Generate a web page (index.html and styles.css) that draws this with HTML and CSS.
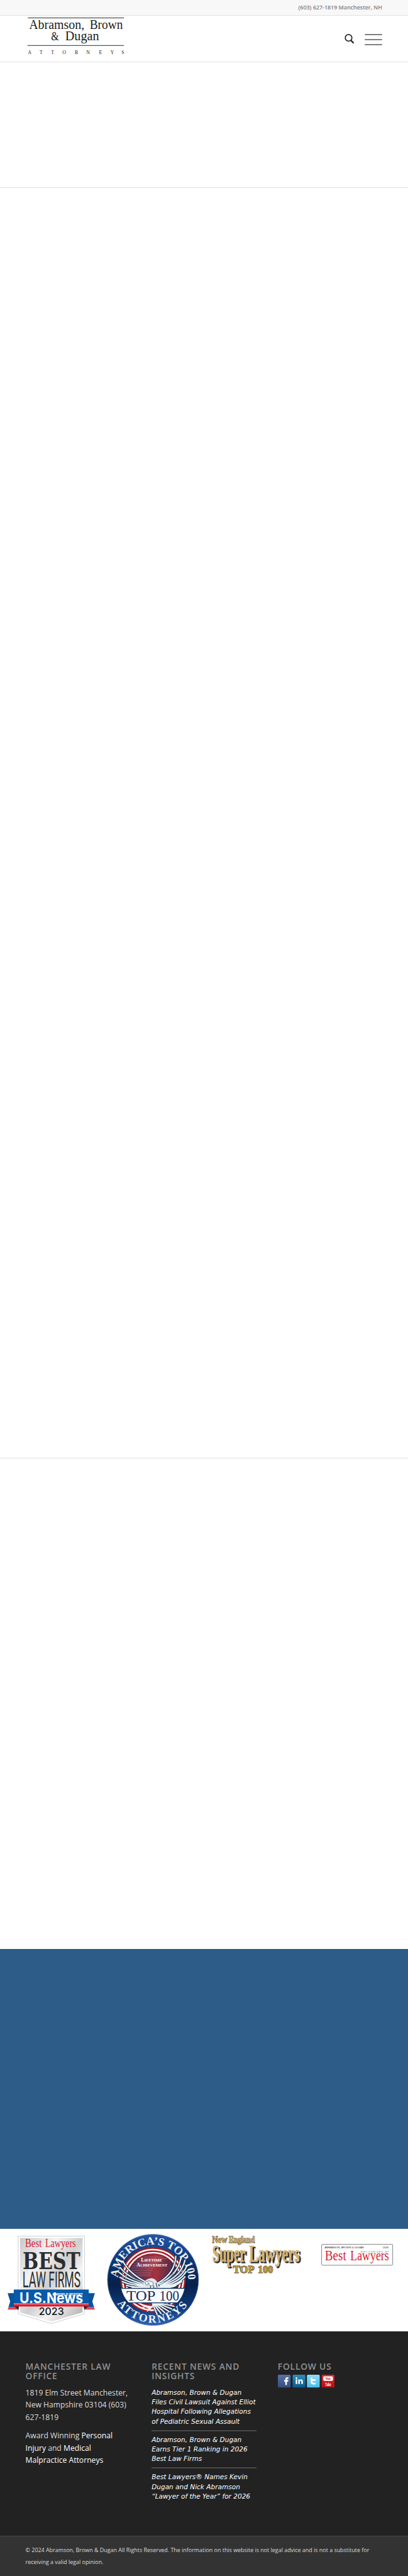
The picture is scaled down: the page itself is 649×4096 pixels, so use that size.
FILE: index.html
```html
<!DOCTYPE html>
<html lang="en">
<head>
  <meta charset="UTF-8">
  <title>Abramson, Brown &amp; Dugan</title>
  <link rel="stylesheet" href="styles.css">
</head>
<body>

  <div class="topbar">(603) 627-1819 Manchester, NH</div>

  <header class="header">
    <svg class="logo" viewBox="150 93 600 270">
      <g stroke="#222" stroke-width="3.5">
        <path d="M162 106H728"/>
        <path d="M160 268H728"/>
      </g>
      <g class="serif" fill="#1c1c1c">
        <text x="169" y="172" font-size="74" textLength="326" lengthAdjust="spacingAndGlyphs">Abramson,</text>
        <text x="526" y="172" font-size="74" textLength="195" lengthAdjust="spacingAndGlyphs">Brown</text>
        <text x="299" y="239" font-size="66" textLength="46" lengthAdjust="spacingAndGlyphs">&amp;</text>
        <text x="382" y="239" font-size="74" textLength="199" lengthAdjust="spacingAndGlyphs">Dugan</text>
        <text y="320" font-size="29" x="162 231 299 365 438 506 581 648 713">ATTORNEYS</text>
      </g>
    </svg>
    <div class="tools">
      <svg class="search" viewBox="0 0 60 60">
        <circle cx="24" cy="23" r="19.5" fill="none" stroke="#2b2b2b" stroke-width="6.5"/>
        <path d="M37 37L54 54" stroke="#2b2b2b" stroke-width="9"/>
      </svg>
      <div class="burger"><span></span><span></span><span></span></div>
    </div>
  </header>

  <main>
    <section class="intro"></section>
    <section class="content"></section>
    <section class="more"></section>
    <section class="blue"></section>

    <section class="badges">
      <!-- Best Law Firms -->
      <svg viewBox="0 27 600 600">
        <defs>
          <linearGradient id="silver" x1="0" y1="0" x2="1" y2="1">
            <stop offset="0" stop-color="#c9c9c9"/>
            <stop offset=".3" stop-color="#f3f3f3"/>
            <stop offset=".5" stop-color="#cfcfcf"/>
            <stop offset=".68" stop-color="#f5f5f5"/>
            <stop offset="1" stop-color="#aaa"/>
          </linearGradient>
        </defs>
        <path d="M107 70H497V526L302 584L107 526Z" fill="#fff" stroke="#c4c4c4" stroke-width="3"/>
        <path d="M118 81H486V518L302 572L118 518Z" fill="url(#silver)"/>
        <text class="serif" x="148" y="135" font-size="66" fill="#d4202f" textLength="97" lengthAdjust="spacingAndGlyphs">Best</text>
        <text class="serif" x="266" y="135" font-size="66" fill="#d4202f" textLength="180" lengthAdjust="spacingAndGlyphs">Lawyers</text>
        <text class="slab" x="133" y="263" font-size="140" fill="#2d2e30" textLength="339" lengthAdjust="spacingAndGlyphs">BEST</text>
        <text class="roboto" x="132" y="371" font-size="131" fill="#2d2e30" textLength="138" lengthAdjust="spacingAndGlyphs">LAW</text>
        <text class="roboto" x="286" y="371" font-size="131" fill="#2d2e30" textLength="188" lengthAdjust="spacingAndGlyphs">FIRMS</text>
        <path d="M45 405H110V502H45L60 454ZM558 405H495V502H558L543 454Z" fill="#0b5299"/>
        <path d="M48 489H100V499H46ZM555 489H500V499H557Z" fill="#e31b2d" stroke="#fff" stroke-width="2"/>
        <path d="M81 482H112L106 500ZM522 482H490L498 500Z" fill="#232323"/>
        <path d="M81 384H522V470H81Z" fill="#075aa9"/>
        <path d="M81 468H522V484H81Z" fill="#e31b2d"/>
        <path d="M81 468H522" stroke="#fff" stroke-width="3"/>
        <g class="inter" fill="#fff">
          <text x="115" y="465" font-size="83" textLength="374" lengthAdjust="spacingAndGlyphs">U.S.News</text>
          <text x="308" y="418" font-size="18" textLength="180" lengthAdjust="spacingAndGlyphs">&amp; WORLD REPORT</text>
        </g>
        <text class="year" x="228" y="533" font-size="58" fill="#111" textLength="148" lengthAdjust="spacingAndGlyphs">2023</text>
      </svg>

      <!-- America's Top 100 -->
      <svg viewBox="0 27 600 600">
        <defs>
          <linearGradient id="navy" x1="0" y1="0" x2="0" y2="1">
            <stop offset="0" stop-color="#2356a4"/>
            <stop offset=".3" stop-color="#0d3773"/>
            <stop offset=".55" stop-color="#06204a"/>
            <stop offset=".8" stop-color="#0d3b7c"/>
            <stop offset="1" stop-color="#2c62b4"/>
          </linearGradient>
          <linearGradient id="wine" x1="0" y1="0" x2="1" y2="0">
            <stop offset="0" stop-color="#332249"/>
            <stop offset=".55" stop-color="#a6333f"/>
            <stop offset="1" stop-color="#30274e"/>
          </linearGradient>
          <path id="arcTop" d="M94 327A207 207 0 0 1 508 327"/>
          <path id="arcBottom" d="M91 465A251 251 0 0 0 515 459"/>
          <clipPath id="disc"><circle cx="301" cy="327" r="148"/></clipPath>
        </defs>
        <circle cx="301" cy="327" r="268" fill="url(#navy)" stroke="#6583ab" stroke-width="3"/>
        <circle cx="301" cy="327" r="192" fill="#a51e25"/>
        <circle cx="301" cy="327" r="178" fill="none" stroke="#fff" stroke-width="9"/>
        <circle cx="301" cy="327" r="160" fill="none" stroke="#fff" stroke-width="9"/>
        <circle cx="301" cy="327" r="152" fill="url(#wine)"/>
        <g clip-path="url(#disc)" stroke="#c68c94" stroke-width="2">
          <path d="M150 193H450M150 203H450M150 213H350M150 223H340M150 233H330M150 243H320M150 253H310M150 263H300M150 273H300M150 283H290M150 293H290M150 303H290"/>
        </g>
        <!-- wings -->
        <g fill="none" stroke-linecap="round">
          <path stroke="#132d4c" stroke-width="15" d="M272 345Q165 295 124 218M265 350Q155 315 107 254M260 354Q150 330 104 284M258 358Q160 348 106 312M258 362Q175 362 120 337M260 367Q190 375 145 359M268 370Q220 376 178 371M330 345Q430 290 435 188M335 350Q450 300 467 188M340 354Q465 315 489 211M343 358Q465 330 500 245M345 362Q450 350 496 278M343 366Q440 365 489 309M338 369Q420 376 470 337M330 370Q395 379 435 361"/>
          <path stroke="#e9f1f5" stroke-width="8" d="M272 345Q165 295 124 218M265 350Q155 315 107 254M260 354Q150 330 104 284M258 358Q160 348 106 312M258 362Q175 362 120 337M260 367Q190 375 145 359M268 370Q220 376 178 371M330 345Q430 290 435 188M335 350Q450 300 467 188M340 354Q465 315 489 211M343 358Q465 330 500 245M345 362Q450 350 496 278M343 366Q440 365 489 309M338 369Q420 376 470 337M330 370Q395 379 435 361"/>
          <path stroke="#48657e" stroke-width="3" d="M150 282Q190 335 260 345M180 300Q210 342 255 355M452 275Q410 330 340 345M420 290Q390 340 335 358"/>
        </g>
        <path d="M240 378Q240 325 285 318Q325 313 338 378Z" fill="#dfe8ee"/>
        <path d="M254 342Q275 325 300 342Q308 357 290 363L276 355L262 357Z" fill="#fff" stroke="#3d546b" stroke-width="3"/>
        <path d="M268 345L280 348M286 363V376M302 360L308 377M318 345L326 372" stroke="#253f5c" stroke-width="4"/>
        <!-- tail and talons -->
        <g stroke-linecap="round">
          <path d="M300 462L348 525M306 462L370 520M314 462L392 511M322 462L410 498M330 462L424 482M296 462L325 530" stroke="#122c50" stroke-width="14"/>
          <path d="M300 462L348 525M306 462L370 520M314 462L392 511M322 462L410 498M330 462L424 482M296 462L325 530" stroke="#edf3f6" stroke-width="8"/>
          <path d="M235 493L262 480L285 492L300 478M240 478L270 490L292 508M268 510L290 490" fill="none" stroke="#eef2f4" stroke-width="7"/>
        </g>
        <path d="M111 377H489Q480 425 446 462H156Q122 425 111 377Z" fill="#f8fafb" stroke="#0d2d5c" stroke-width="5"/>
        <g class="serif">
          <text x="144" y="447" font-size="87" fill="#172f59" textLength="172" lengthAdjust="spacingAndGlyphs">TOP</text>
          <text x="338" y="447" font-size="87" fill="#172f59" textLength="117" lengthAdjust="spacingAndGlyphs">100</text>
          <g fill="#fff" font-weight="bold">
            <text x="230" y="221" font-size="32" textLength="124" lengthAdjust="spacingAndGlyphs">L<tspan font-size="25">IFETIME</tspan></text>
            <text x="204" y="250" font-size="32" textLength="181" lengthAdjust="spacingAndGlyphs">A<tspan font-size="25">CHIEVEMENT</tspan></text>
          </g>
          <g fill="#eef3f9" font-weight="bold">
            <text font-size="66"><textPath href="#arcTop" startOffset="12">AMERICA’S TOP 100</textPath></text>
            <text font-size="66" letter-spacing="10"><textPath href="#arcBottom">ATTORNEYS</textPath></text>
          </g>
        </g>
      </svg>

      <!-- Super Lawyers -->
      <svg viewBox="0 27 600 600">
        <g class="serif" font-weight="bold">
          <g fill="#c9a75e" stroke="#2c2820" stroke-width="3" paint-order="stroke">
            <text x="46" y="109" font-size="52" textLength="88" lengthAdjust="spacingAndGlyphs">New</text>
            <text x="144" y="109" font-size="52" textLength="153" lengthAdjust="spacingAndGlyphs">England</text>
          </g>
          <g class="shadow" fill="#d3ad68" stroke="#f5ead0" stroke-width="3" paint-order="stroke">
            <text x="46" y="219" font-size="142" textLength="196" lengthAdjust="spacingAndGlyphs">Super</text>
            <text x="263" y="219" font-size="142" textLength="297" lengthAdjust="spacingAndGlyphs">Lawyers</text>
          </g>
          <g fill="#c39a3c" stroke="#2c2820" stroke-width="4" paint-order="stroke">
            <text x="169" y="286" font-size="65" textLength="126" lengthAdjust="spacingAndGlyphs">TOP</text>
            <text x="315" y="286" font-size="65" textLength="89" lengthAdjust="spacingAndGlyphs">100</text>
          </g>
        </g>
      </svg>

      <!-- Best Lawyers -->
      <svg viewBox="600 27 600 600">
        <rect x="691" y="118" width="418" height="123" rx="5" fill="#fff" stroke="#666" stroke-width="3"/>
        <g class="sans">
          <text x="709" y="141" font-size="15" fill="#222" textLength="230" lengthAdjust="spacingAndGlyphs">ABRAMSON, BROWN &amp; DUGAN</text>
          <text x="1051" y="141" font-size="15" fill="#222" textLength="34" lengthAdjust="spacingAndGlyphs">2026</text>
          <text x="922" y="167" font-size="15" fill="#777" textLength="165">RECOGNIZED BY</text>
        </g>
        <text class="serif" x="710" y="213" font-size="83" fill="#d9222f" textLength="126" lengthAdjust="spacingAndGlyphs">Best</text>
        <text class="serif" x="860" y="213" font-size="83" fill="#d9222f" textLength="227" lengthAdjust="spacingAndGlyphs">Lawyers</text>
      </svg>
    </section>
  </main>

  <footer class="footer">
    <div class="column">
      <h3>Manchester Law<br>Office</h3>
      <div class="address">
        <p>1819 Elm Street Manchester,<br>New Hampshire 03104 (603)<br>627-1819</p>
        <p>Award Winning <a>Personal<br>Injury</a> and <a>Medical<br>Malpractice Attorneys</a></p>
      </div>
    </div>
    <div class="column">
      <h3>Recent News and<br>Insights</h3>
      <ul class="news">
        <li>Abramson, Brown &amp; Dugan<br>Files Civil Lawsuit Against Elliot<br>Hospital Following Allegations<br>of Pediatric Sexual Assault</li>
        <li>Abramson, Brown &amp; Dugan<br>Earns Tier 1 Ranking in 2026<br>Best Law Firms</li>
        <li>Best Lawyers® Names Kevin<br>Dugan and Nick Abramson<br>“Lawyer of the Year” for 2026</li>
      </ul>
    </div>
    <div class="column">
      <h3>Follow Us</h3>
      <svg class="social" viewBox="435 165 333 75">
        <defs>
          <linearGradient id="fb" x2="0" y2="1"><stop stop-color="#5871a8"/><stop offset="1" stop-color="#354c80"/></linearGradient>
          <linearGradient id="li" x2="0" y2="1"><stop stop-color="#2b8fbd"/><stop offset="1" stop-color="#075b8d"/></linearGradient>
          <linearGradient id="tw" x2="0" y2="1"><stop stop-color="#92dcf8"/><stop offset="1" stop-color="#44bfe9"/></linearGradient>
          <linearGradient id="yt" x2="0" y2="1"><stop stop-color="#e2262a"/><stop offset="1" stop-color="#b90c10"/></linearGradient>
        </defs>
        <rect x="435" y="165" width="75" height="75" rx="6" fill="url(#fb)"/>
        <path d="M479 225V206H472V196H479V192Q479 180 491 180H497V189H492Q488 189 488 193V196H497L495 206H488V225Z" fill="#fff"/>
        <rect x="522" y="165" width="75" height="75" rx="6" fill="url(#li)"/>
        <path d="M540 193H549V220H540ZM555 193H564V197Q568 192 574 192Q582 193 582 203V220H573V205Q573 200 569 200Q564 200 564 206V220H555Z" fill="#fff"/>
        <circle cx="544.500" cy="185" r="5" fill="#fff"/>
        <rect x="606" y="165" width="75" height="75" rx="6" fill="url(#tw)"/>
        <path d="M633 187V207Q633 217 644 217H653M633 197H653" fill="none" stroke="#fff" stroke-width="10" stroke-linecap="round"/>
        <rect x="693" y="165" width="75" height="75" rx="6" fill="url(#yt)"/>
        <rect x="702" y="174" width="57" height="27" rx="6" fill="#fff"/>
        <g class="roboto" font-weight="bold">
          <text x="714" y="195" font-size="22" fill="#c51519" textLength="31" lengthAdjust="spacingAndGlyphs">You</text>
          <text x="713" y="230" font-size="30" fill="#fff" textLength="35" lengthAdjust="spacingAndGlyphs">Tube</text>
        </g>
      </svg>
    </div>
  </footer>

  <div class="socket">© 2024 Abramson, Brown &amp; Dugan All Rights Reserved. The information on this website is not legal advice and is not a substitute for<br>receiving a valid legal opinion.</div>

</body>
</html>
```
FILE: styles.css
```css
* {
  box-sizing: border-box;
}
html {
  font-size: 8.1125px;
}
body {
  margin: 0;
  background-color: #fff;
  font-family: "Open Sans", sans-serif;
}
svg {
  display: block;
}

/* header */
.topbar {
  height: 3.1rem;
  padding-right: 5.05rem;
  background-color: #f8f8f8;
  border-bottom: 1px solid #e1e1e1;
  color: #808080;
  font-size: 1.1rem;
  font-weight: 600;
  line-height: 3rem;
  text-align: right;
}
.header {
  display: flex;
  justify-content: space-between;
  height: 9.1rem;
  padding: 0 5rem;
  border-bottom: 1px solid #e1e1e1;
}
.logo {
  width: 20rem;
  height: 9rem;
}
.tools {
  display: flex;
  align-items: flex-start;
  gap: 1.9rem;
}
.search {
  width: 2rem;
  height: 2rem;
  margin-top: 3.6rem;
}
.burger {
  display: flex;
  flex-direction: column;
  gap: 0.7rem;
  width: 3.5rem;
  margin-top: 3.5rem;
}
.burger span {
  height: 0.3rem;
  border-radius: 1px;
  background-color: #808080;
}

/* page sections */
.intro {
  height: 24.7rem;
  border-bottom: 1px solid #e1e1e1;
}
.content {
  height: 249rem;
  border-bottom: 1px solid #e1e1e1;
}
.more {
  height: 96.1rem;
}
.blue {
  height: 54.9rem;
  background-color: #2d5c88;
}
.badges {
  display: grid;
  grid-template-columns: repeat(4, 1fr);
  height: 20rem;
}
.badges svg {
  width: 20rem;
  height: 20rem;
}
.serif {
  font-family: "Liberation Serif", serif;
}
.slab {
  font-family: "DejaVu Serif", serif;
  font-weight: bold;
}
.roboto {
  font-family: Roboto, sans-serif;
}
.inter {
  font-family: Inter, sans-serif;
  font-weight: bold;
}
.year {
  font-family: Inter, sans-serif;
  font-weight: 500;
}
.sans {
  font-family: "Liberation Sans", sans-serif;
}
.shadow {
  filter: drop-shadow(9px 8px 0 #1d1c1d);
}

/* footer */
.footer {
  display: grid;
  grid-template-columns: repeat(3, 20.6rem);
  gap: 4.13rem;
  height: 40.1rem;
  padding: 6.1rem 5rem 0;
  background-color: #222;
  color: #ddd;
  white-space: nowrap;
}
.footer h3 {
  margin: 0;
  color: #919191;
  font-size: 1.7rem;
  font-weight: 600;
  letter-spacing: 0.1rem;
  line-height: 1.8rem;
  text-transform: uppercase;
}
.address {
  padding-top: 1.2rem;
  font-size: 1.5rem;
  line-height: 2.4rem;
}
.address p {
  margin: 0 0 1.2rem;
}
.address a {
  color: #fff;
}
.news {
  margin: 0;
  padding: 1.4rem 0 0;
  list-style: none;
  color: #fff;
  font-family: "DejaVu Sans", sans-serif;
  font-size: 1.3rem;
  font-style: italic;
  line-height: 1.9rem;
}
.news li {
  margin-bottom: 0.7rem;
  padding-bottom: 0.7rem;
  border-bottom: 0.3rem solid #484848;
}
.news li:last-child {
  border-bottom: none;
}
.social {
  width: 11.1rem;
  height: 2.5rem;
  margin-top: 0.7rem;
}
.socket {
  height: 7.9rem;
  padding: 1.5rem 5rem 0;
  background-color: #333;
  border-top: 1px solid #484848;
  color: #ddd;
  font-size: 1.1rem;
  line-height: 2.4rem;
  white-space: nowrap;
}
```
